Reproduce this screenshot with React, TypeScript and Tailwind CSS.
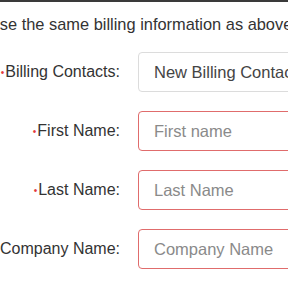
export default function App() {
  const rows = [
    { label: "Billing Contacts:", required: true, value: "New Billing Contact", placeholder: "", error: false },
    { label: "First Name:", required: true, value: "", placeholder: "First name", error: true },
    { label: "Last Name:", required: true, value: "", placeholder: "Last Name", error: true },
    { label: "Company Name:", required: false, value: "", placeholder: "Company Name", error: true },
  ];

  return (
    <div
      className="w-[288px] h-[288px] overflow-hidden bg-white text-[16px] text-[#333]"
      style={{ fontFamily: '"Liberation Sans", Arial, sans-serif' }}
    >
      <div className="h-[2px] bg-[#3a3a3a]" />
      <div className="mt-[12px] ml-[-12px] whitespace-nowrap text-[16.4px] leading-[20px] text-[#333]">
        Use the same billing information as above
      </div>
      <div className="mt-[18px] flex flex-col gap-[19px]">
        {rows.map((r) => (
          <div key={r.label} className="flex items-center gap-[18px]">
            <div className="w-[120px] shrink-0 flex justify-end">
              <span className="whitespace-nowrap shrink-0">
                {r.required && <span className="text-[#e4393c] text-[10px] align-middle mr-[1px]">•</span>}
                {r.label}
              </span>
            </div>
            <div
              className={`h-[40px] w-[220px] shrink-0 rounded-[4px] border px-[15px] flex items-center whitespace-nowrap text-[16.5px] ${
                r.error ? "border-[#e06c6c]" : "border-[#dcdcdc]"
              }`}
            >
              {r.value ? (
                <span className="text-[#444]">{r.value}</span>
              ) : (
                <span className="text-[#8a8a8a]">{r.placeholder}</span>
              )}
            </div>
          </div>
        ))}
      </div>
    </div>
  );
}
